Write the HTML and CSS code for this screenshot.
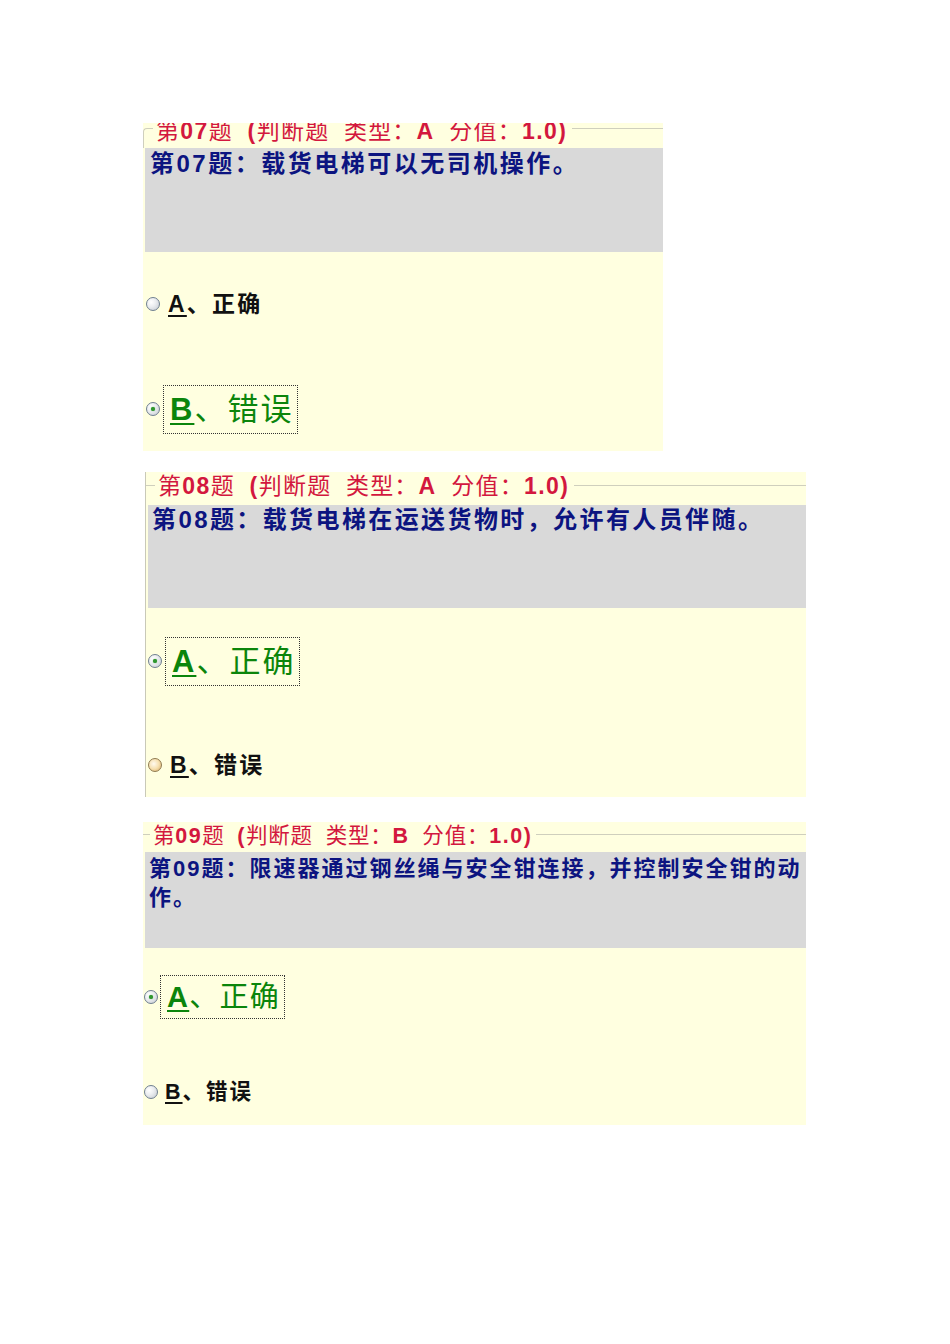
FILE: index.html
```html
<!DOCTYPE html>
<html lang="zh-CN">
<head>
<meta charset="utf-8">
<title>判断题</title>
<link rel="stylesheet" href="styles.css">
</head>
<body>
<div class="page">
  <section class="q q1">
    <div class="head">
      <span class="tick"></span>
      <span class="legend">第<b>07</b>题 <b>(</b>判断题 类型：<b>A</b> 分值：<b>1.0)</b></span>
      <span class="rule"></span>
    </div>
    <div class="stem">第<b>07</b>题：载货电梯可以无司机操作。</div>
    <div class="opts">
      <div class="opt"><span class="radio"></span><span class="label"><u>A</u>、正确</span></div>
      <div class="opt sel"><span class="radio on"></span><span class="label"><u>B</u>、错误</span></div>
    </div>
  </section>

  <section class="q q2">
    <div class="head">
      <span class="tick"></span>
      <span class="legend">第<b>08</b>题 <b>(</b>判断题 类型：<b>A</b> 分值：<b>1.0)</b></span>
      <span class="rule"></span>
    </div>
    <div class="stem">第<b>08</b>题：载货电梯在运送货物时，允许有人员伴随。</div>
    <div class="opts">
      <div class="opt sel"><span class="radio on"></span><span class="label"><u>A</u>、正确</span></div>
      <div class="opt"><span class="radio hover"></span><span class="label"><u>B</u>、错误</span></div>
    </div>
  </section>

  <section class="q q3">
    <div class="head">
      <span class="tick"></span>
      <span class="legend">第<b>09</b>题 <b>(</b>判断题 类型：<b>B</b> 分值：<b>1.0)</b></span>
      <span class="rule"></span>
    </div>
    <div class="stem">第<b>09</b>题：限速器通过钢丝绳与安全钳连接，并控制安全钳的动作。</div>
    <div class="opts">
      <div class="opt sel"><span class="radio on"></span><span class="label"><u>A</u>、正确</span></div>
      <div class="opt"><span class="radio"></span><span class="label"><u>B</u>、错误</span></div>
    </div>
  </section>
</div>
</body>
</html>
```
FILE: styles.css
```css
html, body {
  margin: 0;
  padding: 0;
  background: #ffffff;
}

.page {
  padding-top: 123px;
  display: flex;
  flex-direction: column;
  align-items: flex-start;
}

.q {
  background: #ffffe0;
  box-sizing: border-box;
  display: flex;
  flex-direction: column;
}

.q1 { margin-left: 143px; width: 520px; height: 328px; }
.q2 { margin-left: 145px; width: 661px; height: 325px; margin-top: 21px; border-left: 1px solid #c9c9b8; }
.q3 { margin-left: 143px; width: 663px; height: 303px; margin-top: 25px; }

/* legend row */
.head {
  display: flex;
  align-items: flex-start;
  overflow: hidden;
  flex: none;
}
.tick, .rule {
  border-top: 1px solid #cfcfbd;
  flex: none;
}
.rule { flex: 1; }
.q1 .tick { border-left: 1px solid #cfcfbd; border-top-left-radius: 4px; height: 20px; }

.legend {
  color: #d3173e;
  font-family: "Liberation Sans", "Noto Sans CJK SC", sans-serif;
  font-weight: 400;
  white-space: nowrap;
  word-spacing: 7px;
  letter-spacing: 1.2px;
  padding: 0 4px 0 3px;
}
.legend b { font-weight: 700; letter-spacing: 1.5px; }

.q1 .head { height: 25px; }
.q1 .tick { width: 9px; margin-top: 5px; }
.q1 .rule { margin-top: 5px; }
.q1 .legend { font-size: 23px; line-height: 22px; margin-top: -3px; }

.q2 .head { height: 33px; }
.q2 .tick { width: 9px; margin-top: 13px; }
.q2 .rule { margin-top: 13px; }
.q2 .legend { font-size: 23px; line-height: 22px; margin-top: 3px; }

.q3 .head { height: 30px; }
.q3 .tick { width: 7px; margin-top: 12px; }
.q3 .rule { margin-top: 12px; }
.q3 .legend { font-size: 21.5px; line-height: 20px; margin-top: 4px; word-spacing: 6px; letter-spacing: 0.8px; }

/* question stem */
.stem {
  background: #d9d9d9;
  color: #0c1480;
  font-family: "Liberation Sans", "Noto Sans CJK SC", sans-serif;
  font-weight: 700;
  box-sizing: border-box;
  margin-left: 2px;
  flex: none;
}
.stem b { font-weight: 900; }

.q1 .stem { height: 104px; font-size: 24px; line-height: 30px; letter-spacing: 2.5px; padding: 1px 0 0 5px; }
.q2 .stem { height: 103px; font-size: 24px; line-height: 30px; letter-spacing: 2.4px; padding: 0 0 0 4px; }
.q3 .stem { height: 96px; font-size: 22px; line-height: 29px; letter-spacing: 2px; padding: 2px 0 0 4px; }

/* options */
.opts {
  display: flex;
  flex-direction: column;
}
.opt {
  display: flex;
  align-items: center;
}

.q1 .opts { padding-top: 27px; gap: 55px; }
.q1 .opt { height: 50px; }
.q2 .opts { padding-top: 28px; gap: 54px; }
.q2 .opt { height: 50px; }
.q3 .opts { padding-top: 27px; gap: 51px; }
.q3 .opt { height: 44px; }

.radio {
  width: 14px;
  height: 14px;
  box-sizing: border-box;
  border-radius: 50%;
  border: 1px solid #6f7f90;
  background: radial-gradient(circle at 35% 35%, #ffffff 0%, #eceef1 40%, #c2c8cf 100%);
  flex: none;
  position: relative;
}
.radio.on::after {
  content: "";
  position: absolute;
  left: 4px;
  top: 4px;
  width: 4px;
  height: 4px;
  border-radius: 50%;
  background: #2f962f;
  box-shadow: 0 0 1px #2f962f;
}
.radio.hover {
  border-color: #8f7a50;
  background: radial-gradient(circle at 40% 40%, #fffaf0 0%, #f6e0b0 50%, #d8a860 100%);
}

.q1 .radio { margin-left: 3px; }
.q2 .radio { margin-left: 2px; }
.q3 .radio { margin-left: 1px; }

.label {
  font-family: "Liberation Sans", "Noto Sans CJK SC", sans-serif;
  color: #111111;
  font-weight: 700;
  white-space: nowrap;
}
.label u {
  font-weight: 900;
  text-decoration-thickness: 2px;
  text-underline-offset: 3px;
}

.opt .label { font-size: 23px; letter-spacing: 2.2px; margin-left: 8px; line-height: 30px; }
.q3 .opt .label { font-size: 21.5px; letter-spacing: 2px; margin-left: 7px; }

.opt.sel .label {
  color: #0b850b;
  font-weight: 400;
  border: 1px dotted #333333;
  font-size: 31px;
  letter-spacing: 2px;
  line-height: 41px;
  padding: 3px 4px 3px 6px;
  margin-left: 3px;
}
.opt.sel .label u { font-weight: 700; }
.q3 .opt.sel .label {
  font-size: 29px;
  letter-spacing: 1.3px;
  line-height: 36px;
  margin-left: 2px;
}
```
